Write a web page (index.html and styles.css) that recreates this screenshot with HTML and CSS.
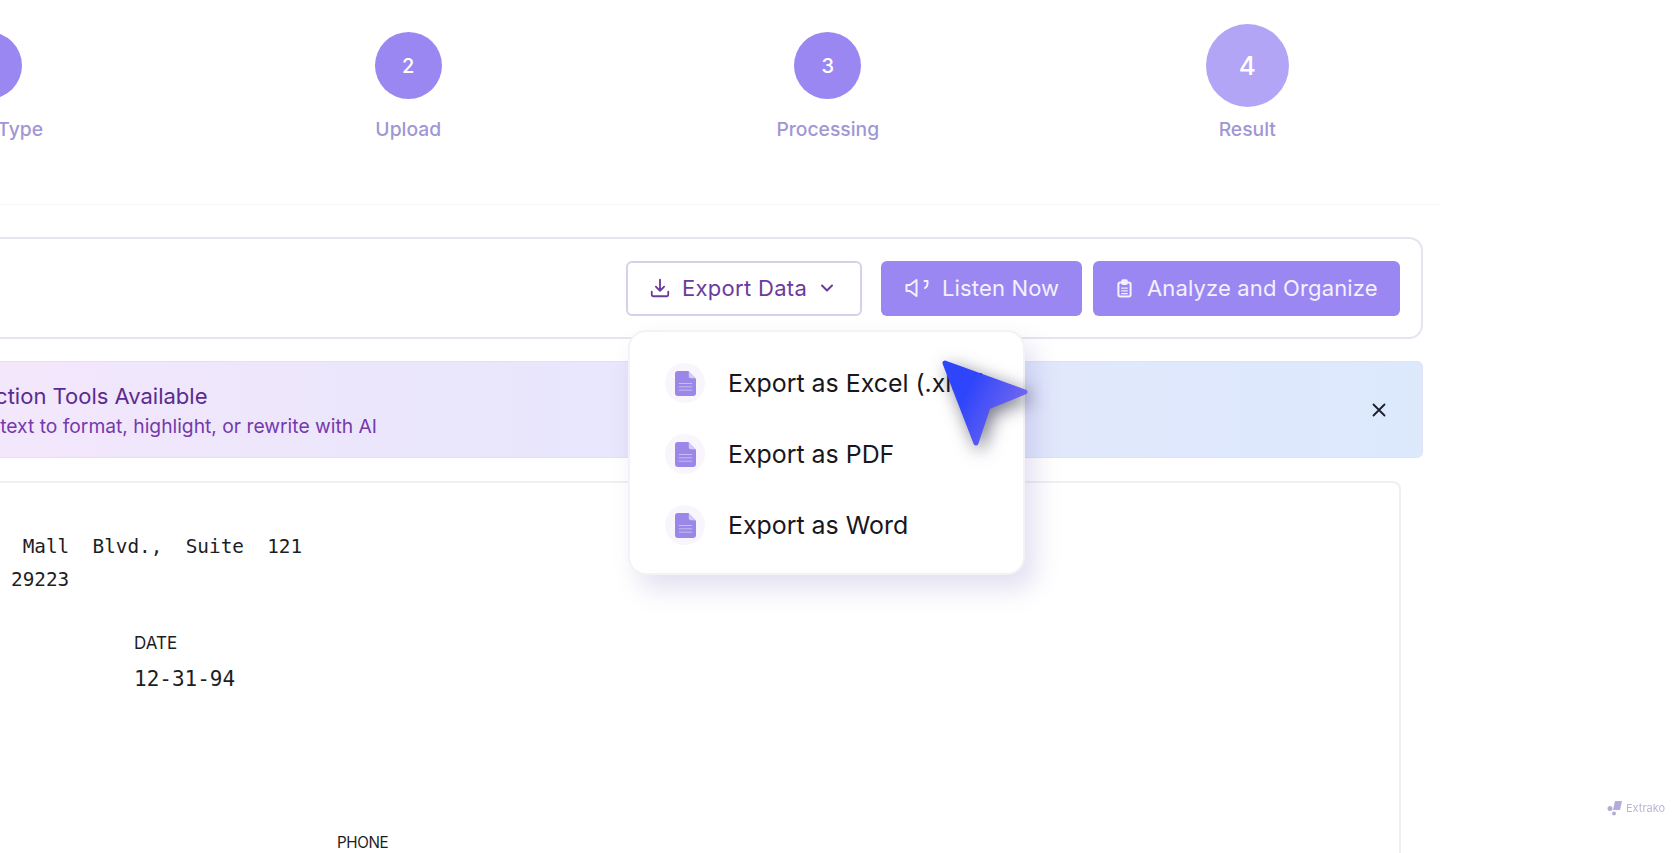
FILE: index.html
```html
<!DOCTYPE html>
<html lang="en">
<head>
<meta charset="utf-8">
<title>Extrako – Result</title>
<link rel="stylesheet" href="styles.css">
</head>
<body>
<div class="stepper">
  <div class="step"><div class="circle-wrap"><div class="circle">1</div></div><div class="step-label">Select Type</div></div>
  <div class="step"><div class="circle-wrap"><div class="circle">2</div></div><div class="step-label">Upload</div></div>
  <div class="step"><div class="circle-wrap"><div class="circle">3</div></div><div class="step-label">Processing</div></div>
  <div class="step"><div class="circle-wrap"><div class="circle circle-active">4</div></div><div class="step-label">Result</div></div>
</div>
<div class="divider"></div>
<main class="main">
  <section class="toolbar">
    <div class="export-wrap">
      <button class="btn btn-outline">
        <svg class="ico" viewBox="0 0 24 24" fill="none" stroke="currentColor" stroke-width="2" stroke-linecap="round" stroke-linejoin="round"><path d="M12 3v12M7.500 10.500 12 15l4.500-4.500M3 16v3a2 2 0 0 0 2 2h14a2 2 0 0 0 2-2v-3"/></svg>
        <span>Export Data</span>
        <svg class="ico-chev" viewBox="0 0 16 16" fill="none" stroke="currentColor" stroke-width="2" stroke-linecap="round" stroke-linejoin="round"><path d="M3 5.500 8 10.500l5-5"/></svg>
      </button>
      <div class="menu">
        <div class="menu-item">
          <span class="file-bg"><svg class="file" viewBox="0 0 22 26"><path d="M3 0h11l8 8v15a3 3 0 0 1-3 3H3a3 3 0 0 1-3-3V3a3 3 0 0 1 3-3z" fill="#9b87e8"/><path d="M14.500 0.500l7 7h-5a2 2 0 0 1-2-2z" fill="#d5ccf6"/><path d="M4 13h14M4 16.500h14M4 20h14" stroke="#c9bff3" stroke-width="1"/></svg></span>
          <span>Export as Excel (.xlsx)</span>
        </div>
        <div class="menu-item">
          <span class="file-bg"><svg class="file" viewBox="0 0 22 26"><path d="M3 0h11l8 8v15a3 3 0 0 1-3 3H3a3 3 0 0 1-3-3V3a3 3 0 0 1 3-3z" fill="#9b87e8"/><path d="M14.500 0.500l7 7h-5a2 2 0 0 1-2-2z" fill="#d5ccf6"/><path d="M4 13h14M4 16.500h14M4 20h14" stroke="#c9bff3" stroke-width="1"/></svg></span>
          <span>Export as PDF</span>
        </div>
        <div class="menu-item">
          <span class="file-bg"><svg class="file" viewBox="0 0 22 26"><path d="M3 0h11l8 8v15a3 3 0 0 1-3 3H3a3 3 0 0 1-3-3V3a3 3 0 0 1 3-3z" fill="#9b87e8"/><path d="M14.500 0.500l7 7h-5a2 2 0 0 1-2-2z" fill="#d5ccf6"/><path d="M4 13h14M4 16.500h14M4 20h14" stroke="#c9bff3" stroke-width="1"/></svg></span>
          <span>Export as Word</span>
        </div>
      </div>
    </div>
    <button class="btn btn-solid btn-listen">
      <svg class="ico-speaker" viewBox="0 0 26 18" fill="none" stroke="currentColor" stroke-width="2" stroke-linecap="round" stroke-linejoin="round"><path d="M2 6v6h3.500l6.500 5V1L5.500 6z"/><path d="M20 2h3v3a5 5 0 0 1-2.500 4"/></svg>
      <span>Listen Now</span>
    </button>
    <button class="btn btn-solid btn-analyze">
      <svg class="ico-clip" viewBox="0 0 16 20" fill="none" stroke="currentColor" stroke-width="2.200" stroke-linecap="round" stroke-linejoin="round"><rect x="1.500" y="3.500" width="13" height="15" rx="2"/><rect x="5.500" y="1.200" width="5" height="4" rx="1" fill="currentColor"/><path d="M5 9.500h6M5 12.500h6M5 15.500h6" stroke-width="1.300"/></svg>
      <span>Analyze and Organize</span>
    </button>
  </section>
  <section class="alert">
    <div class="alert-text">
      <div class="alert-title">Selection Tools Available</div>
      <div class="alert-sub">Select text to format, highlight, or rewrite with AI</div>
    </div>
    <svg class="alert-close" viewBox="0 0 14 14" fill="none" stroke="#1c1c2a" stroke-width="1.800" stroke-linecap="round"><path d="M1.500 1.500l11 11M12.500 1.500l-11 11"/></svg>
  </section>
  <section class="doc">
    <pre class="addr"> Mall  Blvd.,  Suite  121
29223</pre>
    <div class="field-date">
      <div class="field-label">DATE</div>
      <div class="mono-date">12-31-94</div>
    </div>
    <div class="field-phone">PHONE</div>
  </section>
</main>
<svg class="cursor" viewBox="0 0 110 110" width="110" height="110"><defs><linearGradient id="cg" x1="0.100" y1="0.200" x2="0.900" y2="0.600"><stop offset="0.250" stop-color="#2f45fb"/><stop offset="1" stop-color="#6f66ef"/></linearGradient></defs><path d="M15 16 95 45 58 60 46 96z" fill="url(#cg)" stroke="url(#cg)" stroke-width="5" stroke-linejoin="round"/></svg>
<div class="watermark">
  <svg class="wm-logo" viewBox="0 0 16 16"><path d="M8 1h7l-2 9H6z" fill="#a9a5d4"/><circle cx="3" cy="8.500" r="2.500" fill="#a9a5d4"/><circle cx="7" cy="13.500" r="2" fill="#a9a5d4"/></svg>
  <span>Extrako</span>
</div>
</body>
</html>
```
FILE: styles.css
```css
* { box-sizing: border-box; }
html, body { margin: 0; padding: 0; }
body {
  width: 1674px;
  height: 853px;
  overflow: hidden;
  background: #fff;
  font-family: "Inter", "Liberation Sans", sans-serif;
  position: relative;
}
.stepper {
  display: grid;
  grid-template-columns: repeat(4, 419.5px);
  margin-left: -221px;
  padding-top: 24px;
}
.step { display: flex; flex-direction: column; align-items: center; }
.circle-wrap { height: 83px; display: flex; align-items: center; justify-content: center; }
.circle {
  width: 67px; height: 67px; border-radius: 50%;
  background: #9a87f2; color: #fff;
  display: flex; align-items: center; justify-content: center;
  font-size: 20px; font-weight: 500;
}
.circle-active { width: 83px; height: 83px; background: #b3a5f6; font-size: 26px; }
.step-label { margin-top: 8px; font-size: 19.3px; line-height: 28px; font-weight: 500; color: #9f97d3; white-space: nowrap; }
.divider { margin-top: 61px; width: 1440px; height: 1px; background: #f8f8fa; }
.main { margin-left: -200px; width: 1623px; margin-top: 32px; }
.toolbar {
  height: 102px; border: 2px solid #e6e4f0; border-radius: 14px;
  display: flex; align-items: center; justify-content: flex-end; gap: 11px;
  padding-right: 21px; background: #fff;
}
.export-wrap { position: relative; margin-right: 8px; }
.btn {
  height: 55px; border-radius: 6px; font-family: inherit; font-size: 22px; font-weight: 400;
  display: flex; align-items: center; padding: 0; white-space: nowrap; letter-spacing: 0.15px;
}
.btn-outline { width: 236px; background: #fff; border: 2px solid #d8d0e8; color: #6b3a9e; padding-left: 21px; gap: 11px; letter-spacing: 0.3px; }
.ico { width: 22px; height: 22px; }
.ico-chev { width: 16px; height: 16px; margin-left: 1px; }
.btn-solid { background: #9a87f2; border: 0; color: #f4f1fe; }
.btn-listen { width: 201px; padding-left: 23px; gap: 11px; }
.btn-analyze { width: 307px; padding-left: 24px; gap: 15px; }
.ico-speaker { width: 27px; height: 18px; }
.ico-clip { width: 15px; height: 19px; }
.menu {
  position: absolute; left: 2px; top: 69px; width: 397px; height: 245px; z-index: 5;
  background: #fff; border: 2px solid #f3f2f6; border-radius: 18px;
  box-shadow: 10px 14px 26px rgba(110, 100, 180, 0.2);
  padding: 16px 0 0 35px;
  display: flex; flex-direction: column;
}
.menu-item { height: 71px; display: flex; align-items: center; gap: 23px; font-size: 24.9px; color: #17171d; white-space: nowrap; }
.file-bg { width: 40px; height: 40px; border-radius: 50%; background: #f8f6fc; display: flex; align-items: center; justify-content: center; }
.file { width: 21px; height: 25px; }
.alert {
  position: relative; margin-top: 22px; height: 97px;
  border: 1px solid #e3dff5; border-radius: 6px;
  background: linear-gradient(90deg, #fde8f8 0, #f3e7fb 200px, #ebe6fc 600px, #dce9fc 100%);
  display: flex; align-items: center; justify-content: space-between;
  padding: 0 36.5px 0 149px;
}
.alert-title { font-size: 22px; line-height: 33px; font-weight: 400; color: #5a2b90; }
.alert-sub { font-size: 19.25px; line-height: 26px; color: #7439ad; margin: 0 0 0 -12px; }
.alert-close { width: 14px; height: 14px; margin-top: 1px; }
.doc {
  margin-top: 23px; margin-right: 22px; height: 500px;
  border: 2px solid #efeff4; border-radius: 8px; background: #fff;
  padding: 47px 0 0 209px; color: #111;
}
.addr { margin: 0; font-family: "DejaVu Sans Mono", monospace; font-size: 19.35px; line-height: 33px; color: #1d1d24; }
.field-date { margin-left: 123px; margin-top: 35px; }
.field-label { font-size: 17px; line-height: 24px; color: #1d1d24; }
.mono-date { font-family: "DejaVu Sans Mono", monospace; font-size: 21px; line-height: 30px; margin-top: 9px; color: #1d1d24; }
.field-phone { margin-left: 326px; margin-top: 137px; font-size: 15.2px; line-height: 24px; letter-spacing: -0.4px; color: #1d1d24; }
.cursor {
  position: absolute; left: 930px; top: 347px; z-index: 10;
  filter: drop-shadow(4px 5px 9px rgba(30, 30, 60, 0.6));
}
.watermark {
  position: absolute; left: 1607px; top: 800px;
  display: flex; align-items: center; gap: 3px;
  font-size: 11px; color: #b0aed0; opacity: 0.9;
}
.wm-logo { width: 16px; height: 16px; }
```
